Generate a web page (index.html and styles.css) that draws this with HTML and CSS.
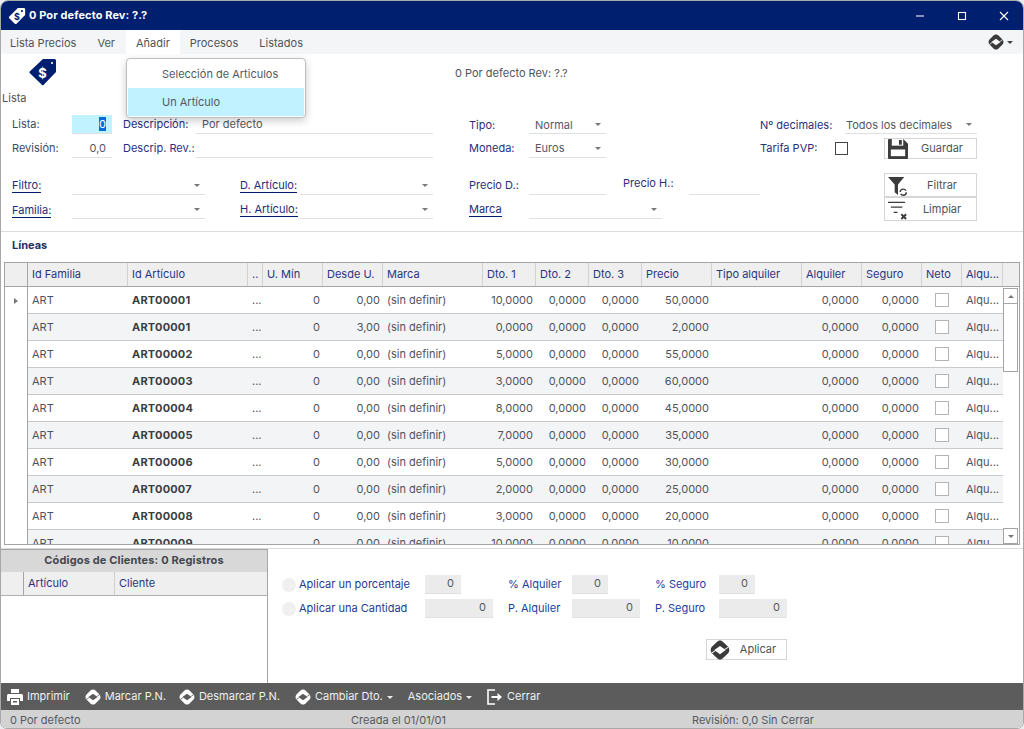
FILE: index.html
```html
<!DOCTYPE html>
<html lang="es">
<head>
<meta charset="utf-8">
<title>0 Por defecto Rev: ?.?</title>
<link rel="stylesheet" href="styles.css">
</head>
<body>
<svg class="defs" width="0" height="0" aria-hidden="true">
  <defs>
    <symbol id="logo" viewBox="0 0 16 16">
      <path fill-rule="evenodd" d="M8 .4C9 .4 9.800 .9 10.500 1.600L14.500 5.400C15.800 6.600 15.800 9.400 14.500 10.600L10.500 14.400C9.800 15.100 9 15.600 8 15.600C7 15.600 6.200 15.100 5.500 14.400L1.500 10.600C.2 9.400 .2 6.600 1.500 5.400L5.500 1.600C6.200 .9 7 .4 8 .4ZM8 4.700L3.400 8 8 11.300 12.600 8ZM3.700 8.400L1.300 9.900 1.900 10.500 4.300 8.800ZM12.300 7.600L14.700 6.100 14.100 5.500 11.700 7.200Z"/>
    </symbol>
  </defs>
</svg>
<div class="window">
  <header class="titlebar">
    <svg class="tag-small" viewBox="0 0 20 20"><path d="M11 1h6.500a1.500 1.500 0 0 1 1.500 1.500V9L9.500 18.500a1.500 1.500 0 0 1-2 0L1.500 12.500a1.500 1.500 0 0 1 0-2z" fill="#fff"/><circle cx="15.500" cy="4.500" r="1.200" fill="#00206f"/><text x="10" y="14" class="tag-glyph-small">$</text></svg>
    <span class="title-text">0 Por defecto Rev: ?.?</span>
    <div class="win-buttons">
      <svg viewBox="0 0 8 8" class="win-icon"><path d="M0 4h8"/></svg>
      <svg viewBox="0 0 8 8" class="win-icon"><rect x=".5" y=".5" width="7" height="7"/></svg>
      <svg viewBox="0 0 8 8" class="win-icon"><path d="M0 0l8 8M8 0L0 8"/></svg>
    </div>
  </header>

  <nav class="menubar">
    <span class="menu-item">Lista Precios</span>
    <span class="menu-item">Ver</span>
    <span class="menu-item active">Añadir</span>
    <span class="menu-item">Procesos</span>
    <span class="menu-item">Listados</span>
    <span class="menu-end"><svg class="logo-dark"><use href="#logo"/></svg><i class="caret dark"></i></span>
    <div class="dropdown">
      <div class="drop-item">Selección de Articulos</div>
      <div class="drop-item selected">Un Artículo</div>
    </div>
  </nav>

  <section class="form">
    <div class="form-head">
      <div class="big-icon">
        <svg class="tag-big" viewBox="0 0 28 28"><path d="M14 1h11.500A1.500 1.500 0 0 1 27 2.500V14L14.500 27a1 1 0 0 1-1.400 0L.7 15a1 1 0 0 1 0-1.400z" fill="#00206f"/><circle cx="23" cy="5" r="1.100" fill="#fff"/><text x="13.500" y="19.500" class="tag-glyph">$</text></svg>
        <span class="big-label">Lista</span>
      </div>
      <span class="center-title">0 Por defecto Rev: ?.?</span>
    </div>

    <div class="grid-a">
      <label class="lab dark">Lista:</label>
      <div class="inp num hl"><span class="sel-text">0</span></div>
      <span></span>
      <label class="lab">Descripción:</label>
      <div class="inp">Por defecto</div>
      <span></span>
      <label class="lab low">Tipo:</label>
      <div class="inp select low-inp">Normal<i class="caret"></i></div>
      <span></span>
      <label class="lab wide-lab low">Nº decimales:</label>
      <div class="inp select wide-sel low-inp">Todos los decimales<i class="caret"></i></div>

      <label class="lab dark">Revisión:</label>
      <div class="inp num">0,0</div>
      <span></span>
      <label class="lab">Descrip. Rev.:</label>
      <div class="inp"></div>
      <span></span>
      <label class="lab">Moneda:</label>
      <div class="inp select">Euros<i class="caret"></i></div>
      <span></span>
      <label class="lab wide-lab pvp">Tarifa PVP:<i class="check dark-check"></i></label>
      <div class="save-cell">
        <button class="btn btn-save" type="button">
          <svg class="btn-ico" viewBox="0 0 21 21"><path d="M1 0h15l5 5v15a1 1 0 0 1-1 1H1a1 1 0 0 1-1-1V1a1 1 0 0 1 1-1z" fill="#3c3c3c"/><rect x="4" y="0" width="12" height="7" fill="#fff"/><rect x="11.500" y="1" width="3" height="5" fill="#3c3c3c"/><rect x="3" y="11" width="15" height="7" fill="#fff"/></svg>
          <span>Guardar</span>
        </button>
      </div>
    </div>

    <div class="grid-b">
      <a class="lab link">Filtro:</a>
      <div class="inp select"><i class="caret"></i></div>
      <span></span>
      <a class="lab link">D. Artículo:</a>
      <div class="inp select"><i class="caret"></i></div>
      <span></span>
      <label class="lab">Precio D.:</label>
      <div class="inp"></div>
      <span></span>
      <label class="lab raise">Precio H.:</label>
      <div class="inp"></div>
      <span></span>
      <button class="btn btn-tall" type="button">
        <svg class="btn-ico" viewBox="0 0 21 21"><path d="M0 1h17l-6.500 8v11L7 17V9z" fill="#3c3c3c"/><circle cx="16" cy="17" r="3.200" fill="none" stroke="#3c3c3c" stroke-width="1.500" stroke-dasharray="8 2"/></svg>
        <span>Filtrar</span>
      </button>

      <a class="lab link fam">Familia:</a>
      <div class="inp select"><i class="caret"></i></div>
      <span></span>
      <a class="lab link">H. Artículo:</a>
      <div class="inp select"><i class="caret"></i></div>
      <span></span>
      <a class="lab link">Marca</a>
      <div class="inp select span-marca"><i class="caret"></i></div>
      <span class="span-rest"></span>
      <button class="btn btn-tall" type="button">
        <svg class="btn-ico" viewBox="0 0 21 21"><path d="M0 2.500h18M3 7.500h12M6 13h4" stroke="#3c3c3c" stroke-width="1.500" fill="none"/><path d="M14 15l5 5M19 15l-5 5" stroke="#3c3c3c" stroke-width="2" fill="none"/></svg>
        <span>Limpiar</span>
      </button>
    </div>
  </section>

  <section class="lines">
    <h2 class="lines-title">Líneas</h2>
    <div class="dgrid">
      <div class="dhead">
        <span></span><span>Id Familia</span><span>Id Artículo</span><span>..</span><span>U. Mín</span><span>Desde U.</span><span>Marca</span><span>Dto. 1</span><span>Dto. 2</span><span>Dto. 3</span><span>Precio</span><span>Tipo alquiler</span><span>Alquiler</span><span>Seguro</span><span>Neto</span><span>Alqu...</span><span class="filler"></span>
      </div>
      <div class="dbody">
        <div class="rows">
          <div class="row"><span class="rh"><i class="arrow"></i></span><span>ART</span><b>ART00001</b><span class="dots">...</span><span class="r">0</span><span class="r">0,00</span><span>(sin definir)</span><span class="r">10,0000</span><span class="r">0,0000</span><span class="r">0,0000</span><span class="r">50,0000</span><span></span><span class="r">0,0000</span><span class="r">0,0000</span><span class="c"><i class="check"></i></span><span>Alqu...</span></div>
          <div class="row"><span class="rh"></span><span>ART</span><b>ART00001</b><span class="dots">...</span><span class="r">0</span><span class="r">3,00</span><span>(sin definir)</span><span class="r">0,0000</span><span class="r">0,0000</span><span class="r">0,0000</span><span class="r">2,0000</span><span></span><span class="r">0,0000</span><span class="r">0,0000</span><span class="c"><i class="check"></i></span><span>Alqu...</span></div>
          <div class="row"><span class="rh"></span><span>ART</span><b>ART00002</b><span class="dots">...</span><span class="r">0</span><span class="r">0,00</span><span>(sin definir)</span><span class="r">5,0000</span><span class="r">0,0000</span><span class="r">0,0000</span><span class="r">55,0000</span><span></span><span class="r">0,0000</span><span class="r">0,0000</span><span class="c"><i class="check"></i></span><span>Alqu...</span></div>
          <div class="row"><span class="rh"></span><span>ART</span><b>ART00003</b><span class="dots">...</span><span class="r">0</span><span class="r">0,00</span><span>(sin definir)</span><span class="r">3,0000</span><span class="r">0,0000</span><span class="r">0,0000</span><span class="r">60,0000</span><span></span><span class="r">0,0000</span><span class="r">0,0000</span><span class="c"><i class="check"></i></span><span>Alqu...</span></div>
          <div class="row"><span class="rh"></span><span>ART</span><b>ART00004</b><span class="dots">...</span><span class="r">0</span><span class="r">0,00</span><span>(sin definir)</span><span class="r">8,0000</span><span class="r">0,0000</span><span class="r">0,0000</span><span class="r">45,0000</span><span></span><span class="r">0,0000</span><span class="r">0,0000</span><span class="c"><i class="check"></i></span><span>Alqu...</span></div>
          <div class="row"><span class="rh"></span><span>ART</span><b>ART00005</b><span class="dots">...</span><span class="r">0</span><span class="r">0,00</span><span>(sin definir)</span><span class="r">7,0000</span><span class="r">0,0000</span><span class="r">0,0000</span><span class="r">35,0000</span><span></span><span class="r">0,0000</span><span class="r">0,0000</span><span class="c"><i class="check"></i></span><span>Alqu...</span></div>
          <div class="row"><span class="rh"></span><span>ART</span><b>ART00006</b><span class="dots">...</span><span class="r">0</span><span class="r">0,00</span><span>(sin definir)</span><span class="r">5,0000</span><span class="r">0,0000</span><span class="r">0,0000</span><span class="r">30,0000</span><span></span><span class="r">0,0000</span><span class="r">0,0000</span><span class="c"><i class="check"></i></span><span>Alqu...</span></div>
          <div class="row"><span class="rh"></span><span>ART</span><b>ART00007</b><span class="dots">...</span><span class="r">0</span><span class="r">0,00</span><span>(sin definir)</span><span class="r">2,0000</span><span class="r">0,0000</span><span class="r">0,0000</span><span class="r">25,0000</span><span></span><span class="r">0,0000</span><span class="r">0,0000</span><span class="c"><i class="check"></i></span><span>Alqu...</span></div>
          <div class="row"><span class="rh"></span><span>ART</span><b>ART00008</b><span class="dots">...</span><span class="r">0</span><span class="r">0,00</span><span>(sin definir)</span><span class="r">3,0000</span><span class="r">0,0000</span><span class="r">0,0000</span><span class="r">20,0000</span><span></span><span class="r">0,0000</span><span class="r">0,0000</span><span class="c"><i class="check"></i></span><span>Alqu...</span></div>
          <div class="row"><span class="rh"></span><span>ART</span><b>ART00009</b><span class="dots">...</span><span class="r">0</span><span class="r">0,00</span><span>(sin definir)</span><span class="r">10,0000</span><span class="r">0,0000</span><span class="r">0,0000</span><span class="r">10,0000</span><span></span><span class="r">0,0000</span><span class="r">0,0000</span><span class="c"><i class="check"></i></span><span>Alqu...</span></div>
        </div>
        <div class="scrollbar">
          <div class="sb-btn"><i class="caret up"></i></div>
          <div class="sb-thumb"></div>
          <div class="sb-track"></div>
          <div class="sb-btn"><i class="caret"></i></div>
        </div>
      </div>
    </div>
  </section>

  <section class="bottom">
    <div class="clients">
      <div class="clients-title">Códigos de Clientes: 0 Registros</div>
      <div class="clients-head"><span></span><span>Artículo</span><span>Cliente</span></div>
    </div>
    <div class="apply">
      <div class="apply-grid">
        <label class="radio-lab"><i class="radio"></i>Aplicar un porcentaje</label>
        <div class="box short">0</div>
        <span class="apply-lab">% Alquiler</span>
        <div class="box short">0</div>
        <span class="apply-lab">% Seguro</span>
        <div class="box short">0</div>
        <label class="radio-lab"><i class="radio"></i>Aplicar una Cantidad</label>
        <div class="box">0</div>
        <span class="apply-lab">P. Alquiler</span>
        <div class="box">0</div>
        <span class="apply-lab">P. Seguro</span>
        <div class="box">0</div>
      </div>
      <button class="btn btn-apply" type="button"><svg class="logo-dark apply-logo"><use href="#logo"/></svg><span>Aplicar</span></button>
    </div>
  </section>

  <div class="toolbar">
    <span class="tool t-print"><svg class="tool-ico" viewBox="0 0 16 16"><path d="M4 0h8v4H4z" fill="#fff"/><path d="M1.500 5h13A1.500 1.500 0 0 1 16 6.500V12h-3V9H3v3H0V6.500A1.500 1.500 0 0 1 1.500 5z" fill="#fff"/><path d="M4 10h8v6H4z" fill="#fff"/><path d="M6 12h4v1.500H6z" fill="#5c5c5c"/></svg>Imprimir</span>
    <span class="tool t-gap15"><svg class="logo-white"><use href="#logo"/></svg>Marcar P.N.</span>
    <span class="tool t-gap13"><svg class="logo-white"><use href="#logo"/></svg>Desmarcar P.N.</span>
    <span class="tool t-gap15"><svg class="logo-white"><use href="#logo"/></svg>Cambiar Dto.<i class="caret light"></i></span>
    <span class="tool t-gap15">Asociados<i class="caret light"></i></span>
    <span class="tool t-gap15 t-exit"><svg class="tool-ico" viewBox="0 0 16 16"><path d="M8 1H1v14h7" fill="none" stroke="#fff" stroke-width="1.600"/><path d="M4.500 7h6V4l4.500 4-4.500 4V9h-6z" fill="#fff"/></svg>Cerrar</span>
  </div>

  <footer class="status">
    <span class="st st-1">0 Por defecto</span>
    <span class="st st-2">Creada el 01/01/01</span>
    <span class="st st-3">Revisión: 0,0 Sin Cerrar</span>
  </footer>
</div>
</body>
</html>
```

FILE: styles.css
```css
* { box-sizing: border-box; }
html, body { margin: 0; padding: 0; background: #e9edf0; }
body { font: 11px/1.2 Inter, "Liberation Sans", sans-serif; color: #4c4f57; overflow: hidden; }
.defs { position: absolute; }
i { display: inline-block; font-style: normal; }
button { font: inherit; color: inherit; }

.window { width: 1024px; height: 729px; display: flex; flex-direction: column; background: #fff; border: 1px solid #a8a8a8; border-radius: 8px 8px 7px 7px; overflow: hidden; }

.titlebar { flex: 0 0 29px; background: #00206f; display: flex; align-items: center; padding-left: 7px; color: #fff; }
.tag-small { width: 18px; height: 18px; }
.tag-glyph-small { font: bold 10px Inter, sans-serif; fill: #00206f; text-anchor: middle; }
.title-text { margin-left: 3px; font-weight: 700; font-size: 11px; letter-spacing: .1px; }
.win-buttons { margin-left: auto; display: flex; align-items: center; gap: 34px; padding-right: 15px; }
.win-icon { width: 8px; height: 8px; overflow: visible; fill: none; stroke: #fff; stroke-width: 1.100; }

.menubar { flex: 0 0 24px; background: #f4f5f7; display: flex; align-items: center; position: relative; }
.menu-item { padding: 0 10px; height: 24px; line-height: 26px; color: #50535a; margin-right: 1px; }
.menu-item:first-child { margin-left: -1px; }
.menu-item.active { background: #fff; margin-right: 0; }
.menu-end { margin-left: auto; display: flex; align-items: center; gap: 3px; padding-right: 10px; }
.logo-dark { width: 16px; height: 16px; fill: #3a3a3a; }
.logo-white { width: 16px; height: 16px; fill: #fff; }
.caret { width: 0; height: 0; border-left: 3.500px solid transparent; border-right: 3.500px solid transparent; border-top: 3.500px solid #777; }
.caret.up { border-top: 0; border-bottom: 3.500px solid #777; }
.caret.dark { border-top-color: #444; }
.caret.light { border-top-color: #eee; }

.dropdown { position: absolute; left: 125px; top: 28px; width: 180px; height: 60px; background: #fff; border: 1px solid #bdbdbd; border-radius: 4px; padding: 1px; box-shadow: 0 3px 8px rgba(0,0,0,.2); z-index: 5; }
.drop-item { height: 28px; line-height: 28px; padding-left: 34px; color: #55585f; }
.drop-item.selected { background: #c0f2ff; }

.form { flex: 0 0 178px; border-bottom: 1px solid #dcdcdc; padding: 0; }
.form-head { height: 61px; display: flex; position: relative; }
.big-icon { width: 60px; padding-left: 1px; display: flex; flex-direction: column; }
.tag-big { width: 28px; height: 28px; margin: 4px 0 0 27px; display: block; }
.tag-glyph { font: bold 13px Inter, sans-serif; fill: #fff; text-anchor: middle; }
.big-label { margin-top: 6px; color: #50535a; }
.center-title { margin: 13px 0 0 394px; color: #50535a; }

.lab { color: #2b2f7c; align-self: center; white-space: nowrap; }
.lab.dark { color: #3f4a5f; }
.low { margin-top: 2px; }
.link { color: #1c2c78; justify-self: start; border-bottom: 1px solid #00206f; line-height: 13px; }
.fam { margin-top: 3px; }
.inp { height: 19px; border-bottom: 1px solid #dfdfe6; line-height: 18px; padding: 0 6px; color: #55585f; position: relative; }
.low-inp { line-height: 20px; }
.inp.num { text-align: right; padding-right: 6px; }
.inp.hl { background: #c0f2ff; }
.sel-text { background: #0a6cd6; color: #fff; }
.select .caret { position: absolute; right: 5px; top: 8px; }

.grid-a { display: grid; grid-template-columns: 60px 40px 11px 73px 237px 36px 60px 77px 154px 85px 132px; grid-template-rows: 19px 19px; row-gap: 5px; padding-left: 11px; }
.grid-a .wide-lab { justify-self: start; }
.wide-sel { padding-left: 1px; }
.pvp { display: flex; align-items: center; width: 88px; justify-content: space-between; }
.check { width: 14px; height: 14px; border: 1px solid #b4b4b4; background: #fff; }
.dark-check { border-color: #444; width: 13px; height: 13px; }
.save-cell { display: flex; justify-content: flex-end; height: 19px; }

.btn { display: flex; align-items: center; background: #fff; border: 1px solid #d6d6d6; padding: 0; cursor: default; color: #50535a; }
.btn span { flex: 1; text-align: center; }
.btn-save { width: 93px; height: 21px; overflow: visible; margin-top: -1px; }
.btn-ico { width: 20px; height: 20px; flex: none; margin-left: 3px; }
.btn-tall { width: 93px; height: 24px; align-self: start; margin-top: -3px; padding-top: 1px; }

.grid-b { display: grid; grid-template-columns: 60px 133px 35px 60px 133px 36px 60px 77px 17px 66px 71px 124px 93px; grid-template-rows: 19px 19px; row-gap: 5px; padding-left: 11px; margin-top: 18px; }
.raise { margin-top: -3px; }
.span-marca { grid-column: 8 / 11; width: 133px; }
.span-rest { grid-column: 11 / 13; }

.lines { flex: 0 0 317px; padding: 0 3px; display: flex; flex-direction: column; border-bottom: 1px solid #dcdcdc; }
.lines-title { margin: 0; padding-left: 8px; height: 30px; line-height: 27px; font-size: 11px; font-weight: 700; color: #1b3163; }
.dgrid { width: 1016px; height: 283px; border: 1px solid #a5a5a5; overflow: hidden; display: flex; flex-direction: column; }
.row { display: grid; grid-template-columns: 23px 100px 120px 15px 60px 60px 100px 53px 53px 53px 70px 90px 60px 60px 40px 41px; }
.dhead { display: grid; grid-template-columns: 23px 100px 120px 15px 60px 60px 100px 53px 53px 53px 70px 90px 60px 60px 40px 41px 16px; height: 24px; background: #efefef; border-bottom: 1px solid #a5a5a5; flex: none; }
.dhead span { padding-left: 4px; border-right: 1px solid #d2d2d2; line-height: 23px; color: #27367f; white-space: nowrap; overflow: hidden; }
.dhead span:first-child { border-right-color: #a5a5a5; }
.dhead .filler { border-right: 0; }
.dbody { flex: 1; display: flex; min-height: 0; }
.rows { width: 998px; }
.row { height: 27px; line-height: 26px; background: #fff; color: #50535a; }
.row:nth-child(even) { background: #f3f4f6; }
.row > * { border-bottom: 1px solid #c9c9c9; padding-left: 4px; white-space: nowrap; overflow: hidden; }
.row b { color: #3a3d44; font-weight: 700; letter-spacing: .2px; }
.row .rh { background: #fff; border-bottom: 0; border-right: 1px solid #a5a5a5; padding: 0; display: flex; align-items: center; justify-content: center; }
.arrow { width: 0; height: 0; border-left: 4px solid #777; border-top: 3.500px solid transparent; border-bottom: 3.500px solid transparent; }
.row .r { text-align: right; padding: 0 3px 0 0; }
.row .c { display: flex; align-items: center; justify-content: center; padding: 0; }

.scrollbar { width: 16px; display: flex; flex-direction: column; background: #fff; padding: 1px 1px 0 0; }
.sb-btn { height: 16px; border: 1px solid #a5a5a5; display: flex; align-items: center; justify-content: center; background: #fff; flex: none; }
.sb-thumb { height: 68px; border: 1px solid #a5a5a5; border-top: 0; flex: none; }
.sb-track { flex: 1; }

.bottom { flex: 0 0 134px; display: flex; }
.clients { width: 267px; border-right: 1px solid #a5a5a5; border-top: 1px solid #a5a5a5; }
.clients-title { height: 22px; background: #d8d8d8; text-align: center; line-height: 21px; font-weight: 700; color: #44474e; letter-spacing: .15px; }
.clients-head { display: grid; grid-template-columns: 23px 91px 1fr; height: 24px; background: #efefef; border-bottom: 1px solid #b0b0b0; }
.clients-head span { border-right: 1px solid #cfcfcf; padding-left: 4px; line-height: 22px; color: #27367f; }
.clients-head span:first-child { border-right-color: #a5a5a5; }
.clients-head span:last-child { border-right: 0; }

.apply { flex: 1; padding: 26px 0 0 14px; display: flex; flex-direction: column; }
.apply-grid { display: grid; grid-template-columns: 143px 83px 64px 83px 64px 68px; grid-template-rows: 19px 19px; row-gap: 5px; justify-items: start; }
.radio-lab { display: flex; align-items: center; color: #1f3a93; align-self: center; white-space: nowrap; }
.radio { width: 14px; height: 14px; border-radius: 50%; background: #f0f0f0; margin-right: 3px; }
.box { width: 68px; height: 19px; background: #ebebeb; border-bottom: 1px solid #dfdfe6; text-align: right; padding: 0 7px; line-height: 17px; color: #55585f; }
.box.short { width: 36px; }
.apply-lab { color: #2040a0; align-self: center; white-space: nowrap; }
.btn-apply { width: 81px; height: 21px; margin: 21px 0 0 424px; overflow: visible; }
.apply-logo { width: 20px; height: 20px; margin-left: 3px; flex: none; }

.toolbar { flex: 0 0 27px; background: #5c5c5c; display: flex; align-items: center; color: #f0f0f0; padding-top: 1px; }
.tool { display: flex; align-items: center; gap: 4px; white-space: nowrap; }
.tool-ico { width: 16px; height: 16px; }
.t-print { margin-left: 6px; }
.t-gap13 { margin-left: 13px; }
.t-gap15 { margin-left: 15px; }
.t-exit { gap: 4px; }

.status { flex: 1; background: #d3d3d3; display: grid; grid-template-columns: 340px 341px 1fr; align-items: center; color: #55585f; padding-top: 3px; }
.st-1 { padding-left: 9px; }
.st-2 { padding-left: 10px; }
.st-3 { padding-left: 10px; }
```
